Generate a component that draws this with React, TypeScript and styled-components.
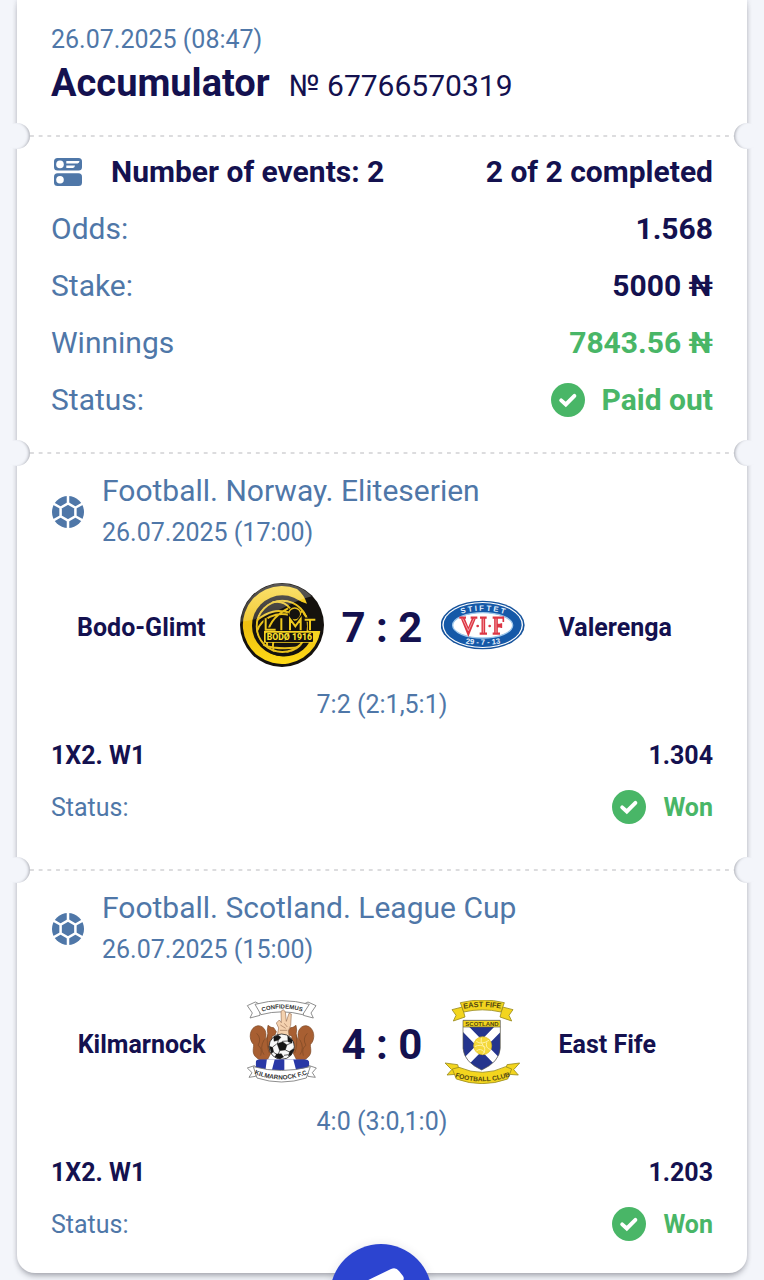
import React from "react";
import styled, { createGlobalStyle } from "styled-components";

const color = {
  page: "#f3f5fa",
  card: "#ffffff",
  ink: "#14114f",
  muted: "#4f77a8",
  success: "#49b667",
  dash: "#dcdcde",
  action: "#2c44d0",
};

const GlobalStyle = createGlobalStyle`
  *, *::before, *::after { box-sizing: border-box; }
  body {
    margin: 0;
    background: ${color.page};
    color: ${color.ink};
    font-family: Roboto, "Liberation Sans", sans-serif;
  }
  h1, h2, p, dl, dt, dd { margin: 0; font: inherit; }
`;

const Page = styled.main`
  min-height: 100vh;
  padding: 0 17px 7px;
  overflow: hidden;
`;

const Ticket = styled.article`
  background: ${color.card};
  border-radius: 0 0 18px 18px;
  box-shadow: 0 5px 6px -2px rgba(40, 42, 56, 0.32), 0 0 5px rgba(40, 42, 56, 0.2);
`;

const Header = styled.header`
  padding: 20px 34px 29px;
`;

const PlacedAt = styled.p`
  color: ${color.muted};
  font-size: 25px;
  line-height: 40px;
`;

const TitleRow = styled.div`
  display: flex;
  align-items: baseline;
  gap: 19px;
  line-height: 46px;
`;

const Title = styled.h1`
  && {
    font-size: 38px;
    font-weight: 700;
    line-height: 46px;
  }
`;

const TicketNumber = styled.span`
  font-size: 30px;
  line-height: 40px;
`;

const Divider = styled.div`
  display: flex;
  align-items: center;
  height: 2px;
  margin: 0 -13px;
`;

const Notch = styled.span<{ $side: "left" | "right" }>`
  position: relative;
  flex: none;
  width: 26px;
  height: 26px;
  border-radius: 50%;
  background: ${color.page};
  box-shadow: inset ${(p) => (p.$side === "left" ? "-3px" : "3px")} 0 3px -2px rgba(40, 42, 56, 0.36);
`;

const Perforation = styled.span`
  flex: 1;
  height: 2px;
  background: linear-gradient(90deg, ${color.dash} 50%, transparent 50%) 0 0 / calc(100% / 81) 2px repeat-x;
`;

const Summary = styled.section`
  padding: 6px 34px 24px;
`;

const Row = styled.div<{ $compact?: boolean }>`
  display: flex;
  align-items: center;
  justify-content: space-between;
  min-height: ${(p) => (p.$compact ? 52 : 57)}px;
  font-size: ${(p) => (p.$compact ? 25 : 30)}px;
`;

const Label = styled.dt`
  color: ${color.muted};
`;

const Value = styled.dd<{ $positive?: boolean }>`
  && {
    display: flex;
    align-items: center;
    gap: 17px;
    font-weight: 700;
    color: ${(p) => (p.$positive ? color.success : color.ink)};
  }
`;

const EventsLabel = styled.dt`
  && {
    display: flex;
    align-items: center;
    gap: 26px;
    font-weight: 700;
  }
`;

const EventSection = styled.section`
  padding: 16px 34px 36px;
  &:last-child { padding-bottom: 23px; }
`;

const EventHead = styled.div`
  display: flex;
  align-items: center;
  gap: 17px;
  color: ${color.muted};
`;

const League = styled.h2`
  && {
    font-size: 30px;
    line-height: 42px;
  }
`;

const Kickoff = styled.p`
  && {
    font-size: 25px;
    line-height: 42px;
  }
`;

const Match = styled.div`
  display: grid;
  grid-template-columns: minmax(0, 1fr) 84px 117px 84px minmax(0, 1fr);
  align-items: center;
  min-height: 90px;
  margin-top: 29px;
  > svg { align-self: start; }
`;

const Team = styled.span<{ $home?: boolean }>`
  margin: ${(p) => (p.$home ? "0 34px 0 0" : "0 0 0 34px")};
  text-align: ${(p) => (p.$home ? "right" : "left")};
  font-size: 25px;
  font-weight: 700;
  line-height: 32px;
`;

const Score = styled.strong`
  text-align: center;
  font-size: 42px;
  line-height: 48px;
  white-space: nowrap;
`;

const Periods = styled.p`
  && {
    margin: 14px 0 6px;
    color: ${color.muted};
    font-size: 25px;
    line-height: 36px;
    text-align: center;
  }
`;

const Market = styled.dt`
  && { font-weight: 700; }
`;

const ActionButton = styled.button`
  position: fixed;
  left: 50%;
  bottom: -66px;
  width: 102px;
  height: 102px;
  margin-left: -52px;
  padding: 0;
  border: 0;
  border-radius: 50%;
  background: ${color.action};
  box-shadow: 0 0 10px rgba(40, 42, 56, 0.1);
  svg { display: block; }
`;

const EventsIcon = () => (
  <svg width="34" height="34" viewBox="0 0 34 34" aria-hidden="true">
    <rect x="3" y="3" width="28" height="12.6" rx="3.5" fill={color.muted} />
    <rect x="3" y="18.2" width="28" height="12.8" rx="3.5" fill={color.muted} />
    <circle cx="9" cy="9.4" r="3.8" fill="#fff" />
    <circle cx="9" cy="24.7" r="3.8" fill="#fff" />
    <path d="M15.3 6h13.2q-.3 2.4-2 2.4H15.3zM15.3 10.6H24q-.3 2.4-2 2.4h-6.7z" fill="#fff" />
  </svg>
);

const BallIcon = () => (
  <svg width="34" height="34" viewBox="0 0 34 34" aria-hidden="true">
    <circle cx="17" cy="17" r="16" fill={color.muted} />
    <g stroke="#fff" fill="none" strokeWidth="2.5">
      <path d="M17 0v8M17 26v8M2 8.3l7.3 4.2M32 8.3l-7.3 4.2M2 25.7l7.3-4.2M32 25.7l-7.3-4.2" />
      <path d="M17 8.4l7.4 4.3v8.6L17 25.6l-7.4-4.3v-8.6z" />
    </g>
  </svg>
);

const CheckIcon = () => (
  <svg width="34" height="34" viewBox="0 0 34 34" aria-hidden="true">
    <circle cx="17" cy="17" r="17" fill={color.success} />
    <path d="M10.2 17.4l4.6 4.1 8.6-8.6" fill="none" stroke="#fff" strokeWidth="3.9" strokeLinecap="round" />
  </svg>
);

const BodoGlimtCrest = () => (
  <svg width="84" height="84" viewBox="30 24 252 252" role="img" aria-label="Bodo-Glimt crest">
    <defs>
      <linearGradient id="bg-gold" x1="0" y1="0" x2="0" y2="1">
        <stop offset="0" stopColor="#f9d32c" />
        <stop offset="0.5" stopColor="#eebf10" />
        <stop offset="1" stopColor="#ffda17" />
      </linearGradient>
      <linearGradient id="bg-gloss" x1="0" y1="0" x2="0" y2="1">
        <stop offset="0" stopColor="#fff" stopOpacity="0.3" />
        <stop offset="1" stopColor="#fff" stopOpacity="0.16" />
      </linearGradient>
      <clipPath id="bg-ball"><circle cx="157" cy="154" r="81" /></clipPath>
    </defs>
    <circle cx="156" cy="150" r="126" fill="#15120e" />
    <path d="M201 42A117 117 0 1 0 271 169H106v30h134A88 88 0 1 1 187 72q20 5 44 14-8-26-30-44z" fill="url(#bg-gold)" />
    <circle cx="157" cy="152" r="91" fill="#15120e" />
    <g clipPath="url(#bg-ball)" fill="none" stroke="#e9c11c" strokeWidth="6">
      <circle cx="157" cy="154" r="77" />
      <path d="M80 136c35-28 60-34 104-22M82 166c12-34 56-58 96-46M112 214c-8-52 16-90 62-114M132 236c-4-14-4-24-2-36M168 236c20-4 36-14 58-22M98 210c44 14 84 12 124 4M212 108c12 8 20 18 22 34M126 82c25-6 40 0 54 18" />
    </g>
    <circle cx="194" cy="117" r="18" fill="#15120e" stroke="#e9c11c" strokeWidth="4" />
    <path d="M107 130v34h30M154 130v36M180 166v-34l16 22 16-22v34M224 134h32M240 134v32" fill="none" stroke="#15120e" strokeWidth="13" />
    <path d="M107 130v34h30M154 130v36M180 166v-34l16 22 16-22v34M224 134h32M240 134v32" fill="none" stroke="#efc91e" strokeWidth="6" />
    <path d="M102 168h168q-3 18-12 35H102z" fill="#f8d421" />
    <rect x="107" y="173" width="142" height="28" rx="3" fill="#15120e" />
    <text x="178" y="196" textAnchor="middle" fontFamily="Roboto, sans-serif" fontWeight="800" fontSize="26" fill="#ffe12c">BODØ 1916</text>
    <path d="M32 140A124 124 0 0 1 245 64C170 82 125 132 32 140z" fill="url(#bg-gloss)" />
  </svg>
);

const ValerengaCrest = () => (
  <svg width="84" height="84" viewBox="33 -21 252 252" role="img" aria-label="Valerenga crest">
    <defs>
      <path id="vif-top" d="M84 75Q157 49 234 75" />
      <path id="vif-bottom" d="M84 156Q157 173 234 156" />
    </defs>
    <ellipse cx="158" cy="105" rx="126" ry="73" fill="#16539c" />
    <ellipse cx="158" cy="105" rx="121" ry="69" fill="#fff" />
    <ellipse cx="158" cy="105" rx="117" ry="66" fill="#1559a8" />
    <ellipse cx="158" cy="106" rx="90" ry="38" fill="#fff" stroke="#9fc8ec" strokeWidth="4" />
    <g fontFamily="Liberation Sans, sans-serif" fontWeight="700" fill="#e5f2ff" textAnchor="middle">
      <text fontSize="23"><textPath href="#vif-top" startOffset="50%">S T I F T E T</textPath></text>
      <text fontSize="23"><textPath href="#vif-bottom" startOffset="50%">29 - 7 - 13</textPath></text>
    </g>
    <g fill="none" stroke="#dc3644" strokeWidth="11">
      <path d="M98 84l17 42 17-42M160 84v46M198 84v46M198 107h17" />
      <path d="M88 83h20M122 83h20M150 83h20M149 131h22M188 83h34M188 131h22" strokeWidth="7" />
      <path d="M220 80v16M214 100v14" strokeWidth="5" />
    </g>
    <g fill="none" stroke="#ffd4d4" strokeWidth="2"><path d="M98 86l17 36 17-36M160 86v42M198 86v42" /></g>
    <circle cx="143" cy="108" r="4" fill="#dc3644" /><circle cx="179" cy="108" r="4" fill="#dc3644" />
  </svg>
);

const KilmarnockCrest = () => (
  <svg width="84" height="84" viewBox="15 30 252 252" role="img" aria-label="Kilmarnock crest">
    <defs>
      <path id="kfc-top" d="M78 67Q140 44 205 66" />
      <path id="kfc-bottom" d="M60 252Q138 285 220 251" />
      <clipPath id="kfc-mound"><path d="M62 235V218q0-10 15-10h130q16 0 16 12v15q-80 12-161 0z" /></clipPath>
    </defs>
    <g fill="#fff" stroke="#777" strokeWidth="2.5">
      <path d="M37 47l24-11 14 7v33l-30 8 7-15zM243 47l-24-11-14 7v33l30 8-7-15z" />
      <path d="M60 43q80-22 163 0l-20 31q-63-17-125 0z" />
    </g>
    <g id="squirrel" fill="#a85f32" stroke="#7a4724" strokeWidth="2">
      <path d="M73 209C47 194 56 178 56 164 38 147 44 110 69 107c20 0 29 22 21 42 8-8 10-14 7-29l2-14 9 6 8 1 8 12-4 10-9 4 2 13-7 12 4 20-12 24z" />
      <path d="M65 130q16 16 4 36 14 8 8 31M87 150q-14 24 0 44M98 134q-4 35 5 55" fill="none" />
    </g>
    <use href="#squirrel" transform="matrix(-1 0 0 1 282 0)" />
    <path d="M126 141l5-27-7-15 9-9 6 8-1-34 7-5 6 7 3 28 8-24 7 2-2 34-7 17 3 20z" fill="#f4d1ae" stroke="#9b7357" strokeWidth="2" />
    <path d="M136 105l16 10M148 100l9 11M135 121h22" fill="none" stroke="#9b7357" strokeWidth="2" />
    <circle cx="140" cy="170" r="38" fill="#f8f8f8" stroke="#222" strokeWidth="2.5" />
    <g fill="#151515" stroke="#151515">
      <path d="M126 161l17-6 13 10-5 15-17 2zM116 141l13-6 9 7-8 9-13 3zM158 138l14 12-1 10-12-5zM103 169l10 3 3 14-7 4zM124 192l15-1 7 10-11 6-15-6zM164 184l11-8 2 3-9 17-8 2z" />
      <path d="M130 151l-3 11M142 154l17-1M155 165l13-6M151 180l13 6M134 182l-4 10M125 162l-12 9M116 187l11 7M147 196l13-2" fill="none" strokeWidth="2" />
    </g>
    <g clipPath="url(#kfc-mound)">
      <rect x="60" y="205" width="165" height="38" fill="#2938a6" />
      <path d="M96 205h24l-10 38H91zM148 205h26l10 38h-36z" fill="#fff" />
    </g>
    <g fill="#fff" stroke="#777" strokeWidth="2.5">
      <path d="M37 234l21-7 12 10-8 22-20 3 9-14zM244 234l-21-7-12 10 8 22 22 3-9-14z" />
      <path d="M55 230q83 23 171 0l-12 34q-75 24-148 0z" />
    </g>
    <g fontFamily="Liberation Sans, sans-serif" fontWeight="700" fill="#333" textAnchor="middle">
      <text fontSize="18"><textPath href="#kfc-top" startOffset="50%">CONFIDEMUS</textPath></text>
      <text fontSize="19"><textPath href="#kfc-bottom" startOffset="50%">KILMARNOCK F.C.</textPath></text>
    </g>
  </svg>
);

const EastFifeCrest = () => (
  <svg width="84" height="84" viewBox="18 30 252 252" role="img" aria-label="East Fife crest">
    <defs>
      <path id="eff-top" d="M82 57Q141 44 202 57" />
      <path id="eff-bottom" d="M60 261Q142 288 226 259" />
      <clipPath id="eff-shield"><path d="M84 91h112v84q-3 41-56 65-53-24-56-65z" /></clipPath>
    </defs>
    <g fill="#f3d51e" stroke="#9a8c1e" strokeWidth="2.5">
      <path d="M51 59l31-8 8 30-35 12 8-17zM234 59l-31-8-8 30 35 12-8-17z" />
      <path d="M76 38q68-16 132 0l-10 28q-56-13-112 0z" />
    </g>
    <g clipPath="url(#eff-shield)">
      <rect x="82" y="90" width="116" height="152" fill="#25358d" />
      <path d="M79 104l123 126M201 104L78 230" stroke="#fff" strokeWidth="24" />
      <rect x="82" y="89" width="116" height="22" fill="#f3d51e" />
    </g>
    <path d="M84 91h112v84q-3 41-56 65-53-24-56-65zM84 111h112" fill="none" stroke="#5e5b48" strokeWidth="2" />
    <circle cx="143" cy="167" r="27" fill="#f4d83a" stroke="#e1bd1b" strokeWidth="2" />
    <path d="M124 154q14 12 38-3M119 170q17-9 32 2M139 143q-4 14 6 25t-2 25M155 157q-5 17 12 22M124 183q13-11 26 5" fill="none" stroke="#fff2a0" strokeWidth="3" />
    <g fill="#f3d51e" stroke="#9a8c1e" strokeWidth="2.5">
      <path d="M30 219l38 5 8 28-40 3 14-16zM254 219l-38 5-8 28 42 3-14-16z" />
      <path d="M52 237l20-5q71 31 140-2l18 7-12 30q-77 28-154 0z" />
    </g>
    <g fontFamily="Liberation Sans, sans-serif" fontWeight="700" fill="#514611" textAnchor="middle">
      <text fontSize="22"><textPath href="#eff-top" startOffset="50%">EAST FIFE</textPath></text>
      <text x="141" y="107" fontSize="18">SCOTLAND</text>
      <text fontSize="20"><textPath href="#eff-bottom" startOffset="50%">FOOTBALL CLUB</textPath></text>
    </g>
  </svg>
);

const TicketDivider = () => (
  <Divider aria-hidden="true">
    <Notch $side="left" />
    <Perforation />
    <Notch $side="right" />
  </Divider>
);

interface EventProps {
  league: string;
  kickoff: string;
  home: string;
  away: string;
  homeCrest: React.ReactNode;
  awayCrest: React.ReactNode;
  score: string;
  periods: string;
  odds: string;
}

const EventCard = (e: EventProps) => (
  <EventSection>
    <EventHead>
      <BallIcon />
      <div>
        <League>{e.league}</League>
        <Kickoff>{e.kickoff}</Kickoff>
      </div>
    </EventHead>
    <Match>
      <Team $home>{e.home}</Team>
      {e.homeCrest}
      <Score>{e.score}</Score>
      {e.awayCrest}
      <Team>{e.away}</Team>
    </Match>
    <Periods>{e.periods}</Periods>
    <dl>
      <Row $compact>
        <Market>1X2. W1</Market>
        <Value>{e.odds}</Value>
      </Row>
      <Row $compact>
        <Label>Status:</Label>
        <Value $positive><CheckIcon />Won</Value>
      </Row>
    </dl>
  </EventSection>
);

export default function App() {
  return (
    <>
      <GlobalStyle />
      <Page>
        <Ticket>
          <Header>
            <PlacedAt>26.07.2025 (08:47)</PlacedAt>
            <TitleRow>
              <Title>Accumulator</Title>
              <TicketNumber>№ 67766570319</TicketNumber>
            </TitleRow>
          </Header>
          <TicketDivider />
          <Summary>
            <dl>
              <Row>
                <EventsLabel><EventsIcon />Number of events: 2</EventsLabel>
                <Value>2 of 2 completed</Value>
              </Row>
              <Row><Label>Odds:</Label><Value>1.568</Value></Row>
              <Row><Label>Stake:</Label><Value>5000 ₦</Value></Row>
              <Row><Label>Winnings</Label><Value $positive>7843.56 ₦</Value></Row>
              <Row><Label>Status:</Label><Value $positive><CheckIcon />Paid out</Value></Row>
            </dl>
          </Summary>
          <TicketDivider />
          <EventCard
            league="Football. Norway. Eliteserien"
            kickoff="26.07.2025 (17:00)"
            home="Bodo-Glimt"
            away="Valerenga"
            homeCrest={<BodoGlimtCrest />}
            awayCrest={<ValerengaCrest />}
            score="7 : 2"
            periods="7:2 (2:1,5:1)"
            odds="1.304"
          />
          <TicketDivider />
          <EventCard
            league="Football. Scotland. League Cup"
            kickoff="26.07.2025 (15:00)"
            home="Kilmarnock"
            away="East Fife"
            homeCrest={<KilmarnockCrest />}
            awayCrest={<EastFifeCrest />}
            score="4 : 0"
            periods="4:0 (3:0,1:0)"
            odds="1.203"
          />
        </Ticket>
      </Page>
      <ActionButton type="button" aria-label="Bet slip">
        <svg width="102" height="102" viewBox="0 0 102 102" aria-hidden="true">
          <path d="M30 40L61 25q5-2 8 2l4 5q2 3-1 6L47 76z" fill="#fff" />
        </svg>
      </ActionButton>
    </>
  );
}
